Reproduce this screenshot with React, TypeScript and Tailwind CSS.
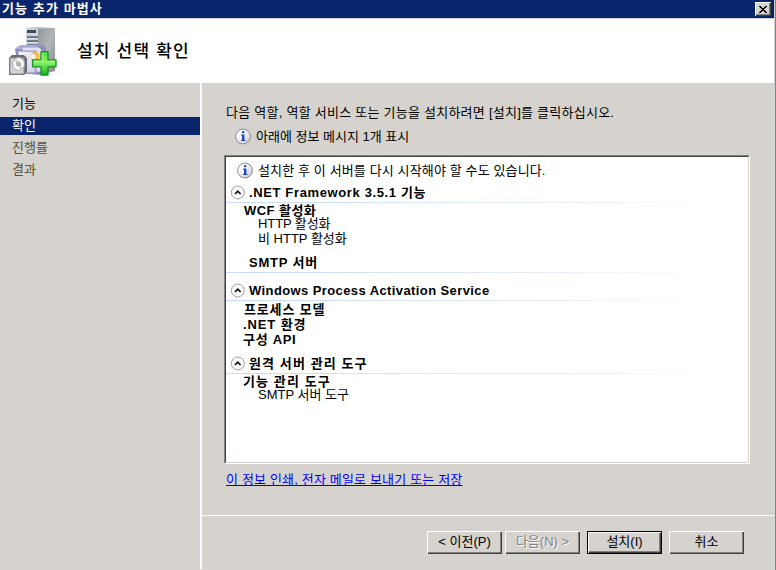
import React from "react";

const FONT = "font-['Liberation_Sans','Noto_Sans_CJK_KR',sans-serif]";

function InfoIcon() {
  return (
    <svg width="17" height="17" viewBox="0 0 17 17" className="block shrink-0">
      <defs>
        <linearGradient id="infoBg" x1="0" y1="0" x2="1" y2="1">
          <stop offset="0.3" stopColor="#ffffff" />
          <stop offset="1" stopColor="#c4c4cc" />
        </linearGradient>
      </defs>
      <circle cx="8" cy="8.5" r="7.4" fill="url(#infoBg)" stroke="#85858c" strokeWidth="1" />
      <rect x="7" y="3" width="2.4" height="2.2" rx="0.6" fill="#2455cc" />
      <path d="M6 6.6h3.4v5.4h1v1H6v-1h1V7.6H6z" fill="#1c46bd" />
    </svg>
  );
}

function Chevron() {
  return (
    <svg width="15" height="15" viewBox="0 0 15 15" className="block shrink-0">
      <circle cx="7.8" cy="7.5" r="6.5" fill="#fafafa" stroke="#9a969c" strokeWidth="0.9" />
      <path d="M5 9 7.8 6.2 10.6 9" fill="none" stroke="#101010" strokeWidth="1.7" />
    </svg>
  );
}

function ServerIcon() {
  return (
    <svg width="48" height="50" viewBox="0 0 48 50" className="block shrink-0">
      <defs>
        <linearGradient id="side" x1="0" y1="0" x2="1" y2="1">
          <stop offset="0" stopColor="#92959a" />
          <stop offset="0.5" stopColor="#b2b4ba" />
          <stop offset="1" stopColor="#85878d" />
        </linearGradient>
        <linearGradient id="plus" x1="0" y1="0" x2="0" y2="1">
          <stop offset="0" stopColor="#45df35" />
          <stop offset="0.45" stopColor="#8df268" />
          <stop offset="1" stopColor="#13b51c" />
        </linearGradient>
        <linearGradient id="box" x1="0" y1="0" x2="1" y2="1">
          <stop offset="0" stopColor="#fafaff" />
          <stop offset="1" stopColor="#cccbe8" />
        </linearGradient>
      </defs>
      <path d="M17 1 28 0 46 1v43l-17 3-12-5z" fill="#b9bdc4" />
      <path d="M29 2 46 1v43l-17 4z" fill="url(#side)" />
      <path d="M17 1 29 2v23H17z" fill="#cfd6dd" />
      <path d="M18 3h9v3h-9z" fill="#404a54" />
      <path d="M18 9h11v2H18zM18 13h11v2H18zM18 17h11v2H18z" fill="#6f7a86" />
      <path d="m6 22 5-4h23l3 3v19l-5 8-22-2z" fill="#8f8dbd" />
      <path d="m6 22 5-4h17l3 4z" fill="#b4b1e2" />
      <path d="M9 24h18v22H9z" fill="url(#box)" stroke="#8b89b7" />
      <path d="M13 20h17l3 3v22H27V24H13z" fill="#e2e1f3" stroke="#8b89b7" strokeWidth="0.8" />
      <circle cx="26" cy="29.5" r="4.6" fill="#f3bd49" />
      <circle cx="24" cy="29.5" r="2.8" fill="#f5edda" />
      <path d="m0 31 3-3h12l3 3v14l-3 3H0z" fill="#6d6a72" />
      <path d="M1 31h14v16H1z" fill="#d5d5d8" stroke="#908d93" />
      <ellipse cx="9.5" cy="37" rx="6" ry="6.5" fill="#f7f7f7" stroke="#aaaab0" />
      <path d="m9.5 37-5-4 3-2zM9.5 37l5 4-3 2z" fill="#c6d3cb" />
      <circle cx="9.5" cy="37" r="1.8" fill="#d8d8dc" stroke="#77777c" />
      <path d="M32 24.6h7v8.2h8v7h-8v8.2h-7v-8.2h-8.4v-7H32z" fill="url(#plus)" stroke="#15952a" strokeWidth="1.3" strokeLinejoin="round" />
      <path d="M33.5 26v8.2h-8.4M41 34.2h4.5" fill="none" stroke="#b6ffa0" opacity=".75" />
    </svg>
  );
}

function Rule() {
  return <div className="h-px w-[490px] shrink-0 bg-linear-to-r from-[#c5dcfa] via-[#dce8fa] to-white" />;
}

function Item({ className, text }: { className: string; text: string }) {
  return <div className={"flex shrink-0 items-center " + className}>{text}</div>;
}

function WizardButton({ label, kind = "normal", className = "" }: { label: string; kind?: "normal" | "disabled" | "default"; className?: string }) {
  const edge =
    kind === "default"
      ? "border border-black shadow-[inset_1px_1px_0_#fff,inset_-1px_-1px_0_#404040,inset_-2px_-2px_0_#808080]"
      : "shadow-[inset_1px_1px_0_#fff,inset_-1px_-1px_0_#404040,inset_-2px_-2px_0_#808080]";
  const ink = kind === "disabled" ? "text-[#848284] [text-shadow:1px_1px_0_#fff]" : "text-black";
  return (
    <button className={"flex h-[23px] w-[75px] items-center justify-center pb-[2px] text-[13px] leading-none whitespace-nowrap " + edge + " " + ink + " " + className}>
      {label}
    </button>
  );
}

export default function App() {
  return (
    <div className={"flex h-[570px] w-[776px] overflow-hidden bg-[#d6d3ce] text-[13px] leading-none whitespace-nowrap text-black " + FONT}>
      <div className="flex h-[570px] w-[774px] shrink-0 flex-col">
        <div className="flex h-[18px] shrink-0 items-center justify-between bg-[#08246b] pr-[3px] pl-[2px]">
          <span className="pb-px font-bold tracking-[1.1px] text-white">기능 추가 마법사</span>
          <button className="flex h-[14px] w-4 items-center justify-center bg-[#d6d3ce] shadow-[inset_1px_1px_0_#fff,inset_-1px_-1px_0_#404040,inset_-2px_-2px_0_#808080]">
            <svg width="8" height="7" viewBox="0 0 8 7" shapeRendering="crispEdges">
              <path d="M0 0h2v1h1v1h2V1h1V0h2v1H7v1H6v1H5v1h1v1h1v1h1v1H6V6H5V5H3v1H2v1H0V6h1V5h1V4h1V3H2V2H1V1H0z" fill="#000" />
            </svg>
          </button>
        </div>
        <header className="mt-px flex h-16 shrink-0 bg-white pt-2 pl-[9px]">
          <ServerIcon />
          <h1 className="mt-4 ml-5 text-[17px] leading-none font-medium tracking-[1.2px]">설치 선택 확인</h1>
        </header>

        <div className="flex min-h-0 flex-1">
          <nav className="h-[486px] w-[202px] shrink-0 border-r-2 border-white pt-[11px]">
            <div className="flex h-[22px] items-center pb-[3px] pl-3">기능</div>
            <div className="mt-px flex h-[18px] items-center bg-[#08246b] pb-px pl-3 text-white">확인</div>
            <div className="mt-px flex h-[23px] items-center pl-3 text-[#52503f]">진행률</div>
            <div className="flex h-[21px] items-center pl-3 text-[#52503f]">결과</div>
          </nav>

          <main className="flex min-w-0 flex-1 flex-col">
            <div className="flex h-[432px] shrink-0 flex-col pr-6 pl-[22px]">
              <p className="mt-[21px] ml-[2px] flex h-4 items-center tracking-[0.25px]">다음 역할, 역할 서비스 또는 기능을 설치하려면 [설치]를 클릭하십시오.</p>
              <div className="mt-2 ml-[11px] flex h-[17px] items-center gap-1">
                <InfoIcon />
                <span>아래에 정보 메시지 1개 표시</span>
              </div>

              <section className="mt-[10px] flex h-[309px] w-[526px] shrink-0 flex-col border-t border-r border-b border-l border-t-[#848284] border-r-white border-b-white border-l-[#848284] bg-white">
                <div className="flex min-h-0 flex-1 flex-col border border-t-[#424142] border-r-[#d6d3ce] border-b-[#d6d3ce] border-l-[#424142]">
                  <div className="flex h-[26px] shrink-0 items-center gap-1 pl-[11px] tracking-[0.13px]">
                    <InfoIcon />
                    <span>설치한 후 이 서버를 다시 시작해야 할 수도 있습니다.</span>
                  </div>
                  <div className="flex h-[19px] shrink-0 items-center gap-1 pl-1 font-bold tracking-[0.63px]">
                    <Chevron />
                    <span>.NET Framework 3.5.1 기능</span>
                  </div>
                  <Rule />
                  <Item className="h-[15px] pl-[18px] font-bold tracking-[0.45px]" text="WCF 활성화" />
                  <Item className="h-[11px] pl-8 tracking-[-0.1px]" text="HTTP 활성화" />
                  <Item className="h-[18px] pl-8" text="비 HTTP 활성화" />
                  <Item className="h-[25px] pt-[5px] pl-[23px] font-bold tracking-[0.8px]" text="SMTP 서버" />
                  <Rule />
                  <div className="flex h-[27px] shrink-0 items-center gap-1 pt-[7px] pl-1 font-bold tracking-[0.4px]">
                    <Chevron />
                    <span>Windows Process Activation Service</span>
                  </div>
                  <Rule />
                  <Item className="h-4 pt-px pl-[18px] font-bold tracking-[0.85px]" text="프로세스 모델" />
                  <Item className="h-[15px] pl-[17px] font-bold tracking-[0.9px]" text=".NET 환경" />
                  <Item className="h-[15px] pl-[17px] font-bold tracking-[0.7px]" text="구성 API" />
                  <div className="flex h-[26px] shrink-0 items-center gap-1 pt-[7px] pl-1 font-bold tracking-[1.1px]">
                    <Chevron />
                    <span>원격 서버 관리 도구</span>
                  </div>
                  <Rule />
                  <Item className="h-[14px] pl-[17px] font-bold tracking-[1.1px]" text="기능 관리 도구" />
                  <Item className="h-[13px] pl-8" text="SMTP 서버 도구" />
                </div>
              </section>

              <a className="mt-[7px] ml-[2px] flex h-4 items-center self-start tracking-[0.17px] text-[#0000ff] underline decoration-1 underline-offset-1 [text-decoration-skip-ink:none]">이 정보 인쇄, 전자 메일로 보내기 또는 저장</a>
            </div>
            <div className="flex h-[55px] shrink-0 border-t border-white pt-[15px] pl-[225px]">
              <WizardButton label="< 이전(P)" />
              <WizardButton label="다음(N) >" kind="disabled" className="ml-[3px]" />
              <WizardButton label="설치(I)" kind="default" className="ml-[7px]" />
              <WizardButton label="취소" className="ml-[7px]" />
            </div>
          </main>
        </div>
      </div>
      <div className="h-full w-px bg-[#d6d3ce]" />
      <div className="h-full w-px bg-[#848284]" />
    </div>
  );
}
